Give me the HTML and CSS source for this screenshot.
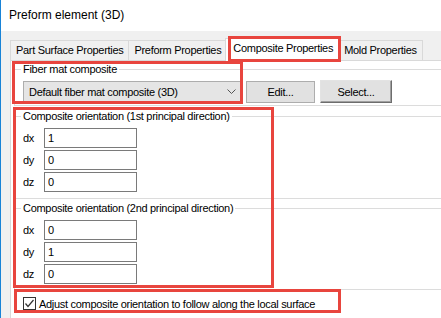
FILE: index.html
```html
<!DOCTYPE html>
<html lang="en">
    <head>
        <meta charset="UTF-8">
        <title>Preform element (3D)</title>
        <link rel="stylesheet" href="styles.css">
    </head>
<body>
    <div class="window">
        <div class="titlebar">Preform element (3D)</div>

        <div class="dialog">
            <div class="tabs">
                <div class="tab">Part Surface Properties</div>
                <div class="tab">Preform Properties</div>
                <div class="tab active">Composite Properties</div>
                <div class="tab">Mold Properties</div>
            </div>

            <div class="tab-panel">
                <div class="group group-fiber">
                    <div class="legend">Fiber mat composite</div>
                    <div class="fiber-row">
                        <div class="combo">
                            <span>Default fiber mat composite (3D)</span>
                            <svg width="9" height="6" viewBox="0 0 9 6">
                                <path d="M0.5 0.5 L4.5 4.5 L8.5 0.5" fill="none" stroke="#555" stroke-width="1"></path>
                            </svg>
                        </div>
                        <button class="btn">Edit...</button>
                        <button class="btn btn-default">Select...</button>
                    </div>
                </div>

                <div class="group group-first">
                    <div class="legend">Composite orientation (1st principal direction)</div>
                    <div class="coords">
                        <div class="coord-row"><label>dx</label><input type="text" value="1"></div>
                        <div class="coord-row"><label>dy</label><input type="text" value="0"></div>
                        <div class="coord-row"><label>dz</label><input type="text" value="0"></div>
                    </div>
                </div>

                <div class="group group-second">
                    <div class="legend">Composite orientation (2nd principal direction)</div>
                    <div class="coords">
                        <div class="coord-row"><label>dx</label><input type="text" value="0"></div>
                        <div class="coord-row"><label>dy</label><input type="text" value="1"></div>
                        <div class="coord-row"><label>dz</label><input type="text" value="0"></div>
                    </div>
                </div>

                <div class="check-row">
                    <span class="checkbox">
                        <svg width="11" height="11" viewBox="0 0 11 11">
                            <path d="M1.5 5.5 L4 8.5 L9.5 2" fill="none" stroke="#333" stroke-width="1.2"></path>
                        </svg>
                    </span>
                    <span>Adjust composite orientation to follow along the local surface</span>
                </div>
            </div>
        </div>

        <!-- annotation boxes -->
        <div class="mark mark-tab"></div>
        <div class="mark mark-fiber"></div>
        <div class="mark mark-orient"></div>
        <div class="mark mark-check"></div>
    </div>
</body>
</html>
```

FILE: styles.css
```css
* {
    margin: 0;
    padding: 0;
    box-sizing: border-box;
    font-family: 'Liberation Sans', Arial, sans-serif;
}

body {
    background-color: #f0f0f0;
    width: 441px;
    height: 318px;
    overflow: hidden;
}

.window {
    position: relative;
    width: 441px;
    height: 318px;
    border-left: 1px solid #1883d7;
    background-color: #f0f0f0;
    overflow: hidden;
    display: flex;
    flex-direction: column;
}

.titlebar {
    height: 31px;
    line-height: 31px;
    padding-left: 8px;
    background-color: white;
    color: #000;
    font-size: 12px;
}

.dialog {
    flex: 1;
    padding: 9px 0 0 9px;
    display: flex;
    flex-direction: column;
    font-size: 11px;
    letter-spacing: -0.3px;
    color: #000;
}

/* tabs */
.tabs {
    display: flex;
    align-items: flex-end;
    height: 20px;
}

.tab {
    height: 20px;
    line-height: 19px;
    padding: 0 5px;
    border: 1px solid #d9d9d9;
    border-bottom: none;
    margin-left: -1px;
    background-color: #f0f0f0;
    white-space: nowrap;
}

.tab:first-child {
    margin-left: 0;
}

.tab.active {
    position: relative;
    z-index: 1;
    height: 23px;
    margin: 0 -2px -1px -2px;
    padding: 0 7px;
    background-color: white;
}

.tab-panel {
    flex: 1;
    width: 480px;
    padding: 8px 0 0 3px;
    background-color: white;
    border-top: 1px solid #d9d9d9;
    border-left: 1px solid #d9d9d9;
}

/* group boxes */
.group {
    border: 1px solid #dcdcdc;
}

.legend {
    width: fit-content;
    margin: -7px 0 0 6px;
    padding: 0 2px;
    line-height: 13px;
    background-color: white;
    white-space: nowrap;
}

.group-fiber {
    padding-bottom: 2px;
}

.group-first {
    margin-top: 10px;
    padding-bottom: 6px;
}

.group-second {
    margin-top: 9px;
    padding-bottom: 5px;
}

.fiber-row {
    display: flex;
    align-items: center;
    gap: 5px;
    margin-top: 4px;
    padding-left: 8px;
}

.combo {
    width: 218px;
    height: 21px;
    padding: 0 4px 0 5px;
    border: 1px solid #adadad;
    background-color: #e5e5e5;
    display: flex;
    align-items: center;
    justify-content: space-between;
}

.btn {
    height: 22px;
    width: 69px;
    border: 1px solid #adadad;
    background-color: #e1e1e1;
    font-size: 11px;
    letter-spacing: -0.3px;
    color: #000;
}

.btn-default {
    width: 72px;
    height: 23px;
    border-color: #e3e3e3 #6d6d6d #6d6d6d #e3e3e3;
    box-shadow: inset -1px -1px 0 #a0a0a0;
}

.coords {
    display: flex;
    flex-direction: column;
    gap: 2px;
    margin-top: 5px;
    padding-left: 8px;
}

.coord-row {
    display: flex;
    align-items: center;
}

.coord-row label {
    width: 21px;
}

.coord-row input {
    width: 93px;
    height: 20px;
    padding-left: 3px;
    border: 1px solid #7a7a7a;
    font-size: 11px;
    color: #000;
    outline: none;
}

/* checkbox */
.check-row {
    display: flex;
    align-items: center;
    gap: 3px;
    margin-top: 7px;
    padding-left: 9px;
}

.checkbox {
    width: 13px;
    height: 13px;
    border: 1px solid #333;
    background-color: white;
    display: flex;
    align-items: center;
    justify-content: center;
}

/* red annotation boxes */
.mark {
    position: absolute;
    border: 3px solid #e8453e;
    z-index: 2;
}

.mark-tab {
    left: 227px;
    top: 36px;
    width: 113px;
    height: 26px;
}

.mark-fiber {
    left: 11px;
    top: 61px;
    width: 231px;
    height: 43px;
}

.mark-orient {
    left: 12px;
    top: 107px;
    width: 261px;
    height: 181px;
}

.mark-check {
    left: 13px;
    top: 289px;
    width: 327px;
    height: 24px;
}
```
